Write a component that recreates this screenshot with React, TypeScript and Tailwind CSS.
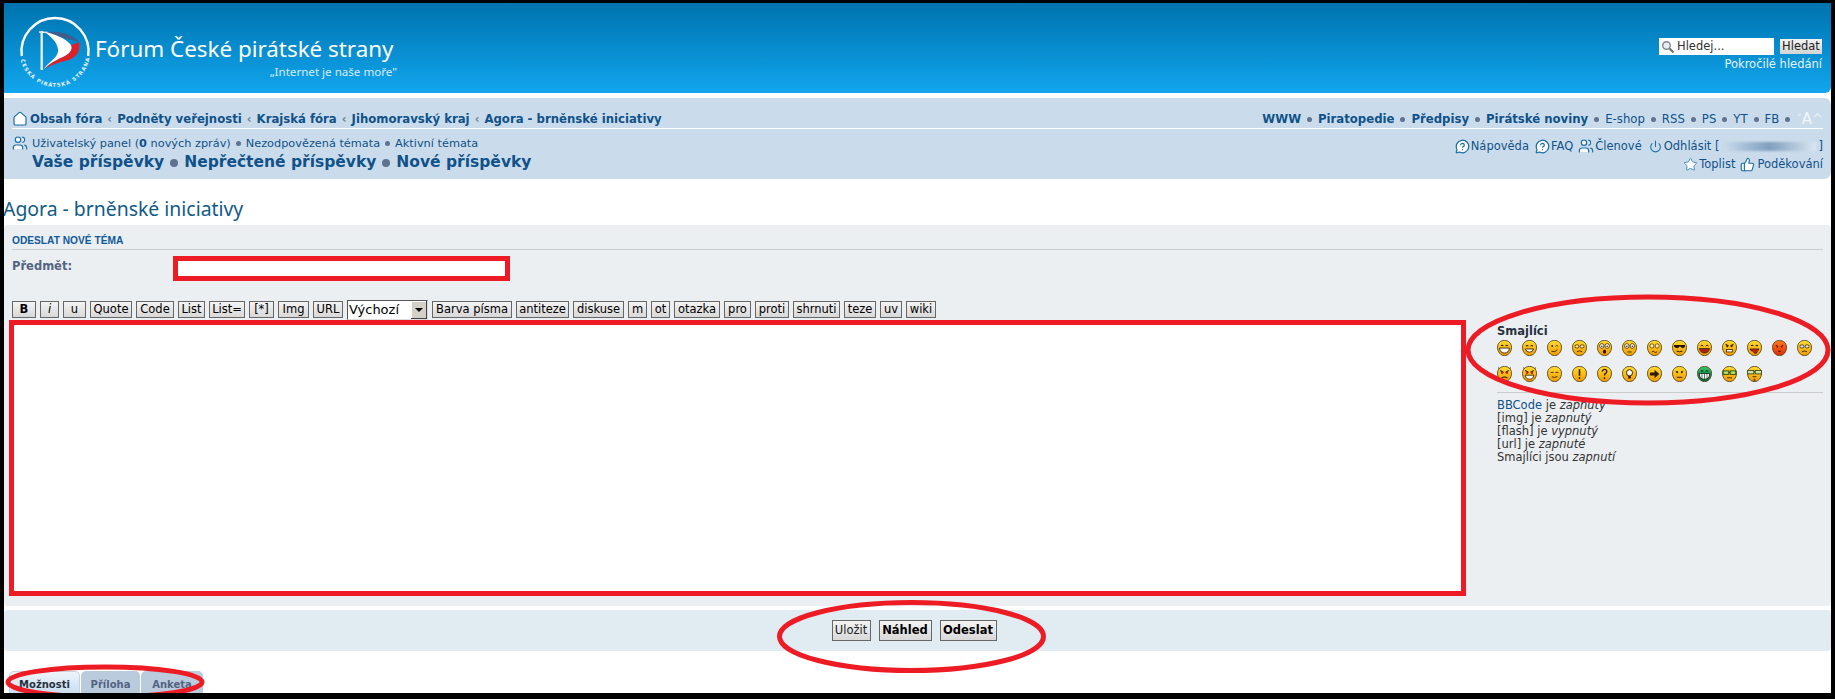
import { House, MessageCircleQuestion, Power, Star, ThumbsUp, Users } from "lucide-react";
import type { ReactNode } from "react";

const Sep = () => <span className="mx-[5px] size-[5px] shrink-0 rounded-full bg-[#5f7290]" />;
const WideSep = () => <span className="mx-[6px] size-[5px] shrink-0 rounded-full bg-[#5f7290]" />;
const Crumb = () => <span className="mx-[5px] font-bold text-[#6a86a4]">‹</span>;
const BigSep = () => <span className="mx-[6px] size-[8px] shrink-0 rounded-full bg-[#5f7290]" />;

const toolbar = [
  { label: "B", w: "w-[24px]", extra: "font-bold" },
  { label: "i", w: "w-[19px]", extra: "italic" },
  { label: "u", w: "w-[23px]", extra: "" },
  { label: "Quote", w: "w-[42px]", extra: "" },
  { label: "Code", w: "w-[38px]", extra: "" },
  { label: "List", w: "w-[27px]", extra: "" },
  { label: "List=", w: "w-[36px]", extra: "" },
  { label: "[*]", w: "w-[25px]", extra: "" },
  { label: "Img", w: "w-[31px]", extra: "" },
  { label: "URL", w: "w-[30px]", extra: "" },
];

const toolbar2 = [
  { label: "Barva písma", w: "w-[80px]" },
  { label: "antiteze", w: "w-[53px]" },
  { label: "diskuse", w: "w-[51px]" },
  { label: "m", w: "w-[19px]" },
  { label: "ot", w: "w-[19px]" },
  { label: "otazka", w: "w-[46px]" },
  { label: "pro", w: "w-[27px]" },
  { label: "proti", w: "w-[34px]" },
  { label: "shrnuti", w: "w-[47px]" },
  { label: "teze", w: "w-[32px]" },
  { label: "uv", w: "w-[22px]" },
  { label: "wiki", w: "w-[30px]" },
];

function ToolButton({ className, children }: { className: string; children: ReactNode }) {
  return (
    <button className={`h-[17px] shrink-0 border border-[#666666] bg-linear-to-b from-[#f4f4f4] to-[#d8d8d8] text-center text-[11.5px] leading-[15px] text-black ${className}`}>
      {children}
    </button>
  );
}

const eyes = (
  <>
    <circle cx="5.2" cy="5.8" r="0.9" fill="#2a1a00" />
    <circle cx="9.8" cy="5.8" r="0.9" fill="#2a1a00" />
  </>
);
const bigEyes = (
  <>
    <circle cx="4.8" cy="5.6" r="2.2" fill="#fff" stroke="#2a1a00" strokeWidth="0.7" />
    <circle cx="10.2" cy="5.6" r="2.2" fill="#fff" stroke="#2a1a00" strokeWidth="0.7" />
    <circle cx="4.8" cy="5.8" r="0.7" fill="#000" />
    <circle cx="10.2" cy="5.8" r="0.7" fill="#000" />
  </>
);
const line = "none";
const ink = "#2a1a00";

const faces: ReactNode[] = [
  <>
    <path d="M4 5.5q1.2-1.2 2.4 0M8.6 5.5q1.2-1.2 2.4 0" fill={line} stroke={ink} />
    <path d="M2.5 7.6h10q-.6 4.6-5 4.6t-5-4.6z" fill="#fff" stroke={ink} strokeWidth="0.8" />
  </>,
  <>
    <path d="M4 5.8q1.2-1.2 2.4 0M8.6 5.8q1.2-1.2 2.4 0" fill={line} stroke={ink} />
    <path d="M3.5 8.4h8q-.6 3-4 3t-4-3z" fill="#fff" stroke={ink} strokeWidth="0.8" />
  </>,
  <>
    <circle cx="5.2" cy="5.6" r="0.9" fill={ink} />
    <path d="M8.6 5.8q1.2-1.2 2.4 0M4.5 10.6q3.5 1.4 6-1.6" fill={line} stroke={ink} strokeWidth="0.8" />
  </>,
  <>
    <rect x="3" y="4.6" width="3.8" height="2.8" rx="1.2" fill="#ffe9a8" stroke={ink} strokeWidth="0.7" />
    <rect x="8.2" y="4.6" width="3.8" height="2.8" rx="1.2" fill="#ffe9a8" stroke={ink} strokeWidth="0.7" />
    <path d="M5 11q2.5-1.8 5 0" fill={line} stroke={ink} strokeWidth="0.8" />
  </>,
  <>
    {bigEyes}
    <ellipse cx="7.5" cy="11" rx="1.6" ry="2" fill="#3a0a00" />
  </>,
  <>
    {bigEyes}
    <path d="M5.5 11.2h4" fill={line} stroke={ink} strokeWidth="0.8" />
  </>,
  <>
    <circle cx="4.9" cy="5.6" r="2" fill="#ffe9a8" stroke={ink} strokeWidth="0.6" />
    <circle cx="10.1" cy="5.6" r="2" fill="#ffe9a8" stroke={ink} strokeWidth="0.6" />
    <path d="M4.8 11.2q1.4-1.4 2.7 0t2.7-.4" fill={line} stroke={ink} strokeWidth="0.8" />
  </>,
  <>
    <path d="M2 4.8h11v1.4q-1 1.6-2.6 1.4-1.4 0-2-1.4h-.8q-.6 1.4-2 1.4-2 .2-3.6-1.4z" fill="#241500" />
    <path d="M4.5 10.4q3 1.4 6 0" fill={line} stroke={ink} strokeWidth="0.9" />
  </>,
  <>
    <path d="M3.5 5.6q1.4-1.4 2.8 0M8.7 5.6q1.4-1.4 2.8 0" fill={line} stroke={ink} strokeWidth="0.9" />
    <path d="M2.5 8h10q-.8 4.2-5 4.2t-5-4.2z" fill="#b3201a" stroke={ink} strokeWidth="0.7" />
  </>,
  <>
    <path d="M3.6 4l3 1.6M11.4 4l-3 1.6" fill={line} stroke={ink} />
    {eyes}
    <rect x="4.5" y="9" width="6" height="2.2" fill="#fff" stroke={ink} strokeWidth="0.7" />
  </>,
  <>
    <path d="M4 5.5q1.2-1.2 2.4 0M8.6 5.5q1.2-1.2 2.4 0" fill={line} stroke={ink} />
    <path d="M3 8.4h9q-.6 1.6-1.6 2-.4 2.4-2.2 2.2-1.6 0-1.8-2-2.8 0-3.4-2.2z" fill="#c8201a" stroke={ink} strokeWidth="0.7" />
  </>,
  <>
    <path d="M3.8 5l2.4 1.2M11.2 5L8.8 6.2" fill={line} stroke="#5c1400" />
    <circle cx="5.2" cy="6.6" r="0.7" fill="#5c1400" />
    <circle cx="9.8" cy="6.6" r="0.7" fill="#5c1400" />
    <path d="M6 10.6h3" fill={line} stroke="#5c1400" />
  </>,
  <>
    <rect x="3" y="4.6" width="3.8" height="2.8" rx="1.2" fill="#cfe4f4" stroke={ink} strokeWidth="0.7" />
    <rect x="8.2" y="4.6" width="3.8" height="2.8" rx="1.2" fill="#cfe4f4" stroke={ink} strokeWidth="0.7" />
    <path d="M5 11q2.5-1.4 5 0" fill={line} stroke={ink} strokeWidth="0.8" />
  </>,
  <>
    <path d="M3.2 4.2l3.4 1.8M11.8 4.2L8.4 6" fill={line} stroke={ink} />
    <circle cx="5" cy="6.4" r="1.1" fill="#d01010" />
    <circle cx="10" cy="6.4" r="1.1" fill="#d01010" />
    <path d="M4.5 11.4q3-2.2 6 0" fill={line} stroke={ink} />
  </>,
  <>
    <path d="M3.2 4.2l3.4 1.8M11.8 4.2L8.4 6" fill={line} stroke={ink} />
    <circle cx="5" cy="6.4" r="1.1" fill="#d01010" />
    <circle cx="10" cy="6.4" r="1.1" fill="#d01010" />
    <path d="M3.2 8.6h8.6q-.6 3.8-4.3 3.8t-4.3-3.8z" fill="#fff" stroke={ink} strokeWidth="0.8" />
  </>,
  <>
    <path d="M3.6 6h3M8.4 6h3M4.8 10.2q3 1.2 5.6-.4" fill={line} stroke={ink} strokeWidth="0.8" />
  </>,
  <>
    <path d="M7.5 3v6.2" fill={line} stroke={ink} strokeWidth="1.6" />
    <circle cx="7.5" cy="11.2" r="0.9" fill={ink} />
  </>,
  <>
    <path d="M5.2 5.2q.4-2 2.4-2t2.2 1.9q0 1.2-1.3 1.9-1 .6-1 1.9" fill={line} stroke={ink} strokeWidth="1.3" />
    <circle cx="7.5" cy="11.4" r="0.9" fill={ink} />
  </>,
  <>
    <circle cx="7.5" cy="6.4" r="3" fill="#fff" stroke={ink} strokeWidth="0.9" />
    <rect x="6.2" y="9.2" width="2.6" height="2.6" fill={ink} />
  </>,
  <path d="M3 6.2h4.6V3.6l4.6 3.9-4.6 3.9V8.8H3z" fill={ink} />,
  <>
    <path d="M3.8 4.8l2.2.6M9 5.4l2.2-.6" fill={line} stroke={ink} strokeWidth="0.7" />
    {eyes}
    <path d="M4.8 10.6h5.4" fill={line} stroke={ink} strokeWidth="0.9" />
  </>,
  <>
    <path d="M4 5q1.2-1.2 2.4 0M8.6 5q1.2-1.2 2.4 0" fill={line} stroke="#021" />
    <path d="M2.4 7h10.2q.4 5.4-5.1 5.4T2.4 7z" fill="#fff" stroke="#021" strokeWidth="0.8" />
    <path d="M5 7v5M7.5 7v5.4M10 7v5" fill={line} stroke="#021" strokeWidth="0.6" />
  </>,
  <>
    <rect x="1.2" y="4.6" width="5.6" height="3.2" fill="#b8e26a" stroke="#1c3a00" strokeWidth="0.8" />
    <rect x="8.2" y="4.6" width="5.6" height="3.2" fill="#b8e26a" stroke="#1c3a00" strokeWidth="0.8" />
    <path d="M6.8 6h1.4M5 11h5" fill={line} stroke={ink} strokeWidth="0.8" />
  </>,
  <>
    <rect x="0.6" y="4.2" width="6.2" height="3.2" fill="#c6e6a0" stroke="#39401a" strokeWidth="0.8" />
    <rect x="8.2" y="4.2" width="6.2" height="3.2" fill="#c6e6a0" stroke="#39401a" strokeWidth="0.8" />
    <path d="M6.8 5.6h1.4M5.6 10h3.8" fill={line} stroke={ink} strokeWidth="0.8" />
    <path d="M6.6 12h1.8v2.4H6.6z" fill="#5a4a30" />
  </>,
];

function Smiley({ index }: { index: number }) {
  const green = index === 21;
  const red = index === 11;
  const from = green ? "#39c46a" : red ? "#ff7a1a" : "#ffdc30";
  const to = green ? "#046b30" : red ? "#e02a08" : "#f29a00";
  return (
    <svg width="15" height="16" viewBox="0 0 15 15" preserveAspectRatio="none" className="shrink-0">
      <defs>
        <linearGradient id={`face${index}`} x1="0" y1="0" x2="0" y2="1">
          <stop offset="0" stopColor={from} />
          <stop offset="1" stopColor={to} />
        </linearGradient>
      </defs>
      {(index === 13 || index === 14) && <path d="M1.2 1l3.4 2-2.6 2.4zM13.8 1l-3.4 2 2.6 2.4z" fill="#8a3a00" />}
      <path d="M7.5.4c4 0 7 2.700 7 6.400 0 4.300-3 7.800-7 7.800s-7-3.500-7-7.800C.5 3.100 3.500.4 7.500.4z" fill={`url(#face${index})`} stroke="#4a3a10" strokeWidth="0.8" />
      {faces[index]}
    </svg>
  );
}

function Logo() {
  return (
    <svg width="80" height="80" viewBox="0 0 80 80" className="shrink-0">
      <defs>
        <path id="logoTextArc" d="M5.500 47A35.300 35.300 0 0 0 74.500 47" />
      </defs>
      <path d="M6.800 44A33.500 33.500 0 1 1 73.200 44" fill="none" stroke="#fff" strokeWidth="2.400" />
      <rect x="25.500" y="19" width="2.400" height="39" fill="#e6eef5" />
      <path d="M24 20l9 .500" stroke="#e6eef5" strokeWidth="1.400" />
      <path d="M30 20C45 19 58 22 64 30C58 28 50 26 44 25C40 23 35 21 30 20z" fill="#3d5e8c" />
      <path d="M30 20C40 22 50 26 56 33C58 36 56 41 50 44C44 47 36 50 29 57C33 50 44 46 43 37C42 30 36 25 30 20z" fill="#fff" />
      <path d="M64 30C66 40 60 47 50 49C42 51 35 53 29 58C36 50 44 47 50 44C56 41 58 36 56 33C59 32 62 31 64 30z" fill="#e11f26" />
      <text fontSize="5.200" fontWeight="700" fill="#eaf4fb" fontFamily="'DejaVu Sans', sans-serif" letterSpacing="1">
        <textPath href="#logoTextArc" startOffset="1%">ČESKÁ PIRÁTSKÁ STRANA</textPath>
      </text>
    </svg>
  );
}

export default function App() {
  const row1 = Array.from({ length: 13 }, (_, i) => i);
  const row2 = Array.from({ length: 11 }, (_, i) => i + 13);
  return (
    <div className="relative h-[699px] w-[1835px] overflow-hidden border-t-[3px] border-r-[4px] border-b-[6px] border-l-[4px] border-black bg-white text-[11.5px] text-[#536482] [font-family:'DejaVu_Sans',sans-serif]">
      {/* header */}
      <header className="flex h-[90px] items-start justify-between rounded-br-[6px] bg-linear-to-b from-[#0073ae] to-[#12a6ee] pr-[9px]">
        <div className="flex pl-[11px] pt-[9px]">
          <Logo />
          <div className="flex w-[304px] flex-col items-end pt-[22px] text-white [font-family:'Noto_Sans',sans-serif]">
            <span className="self-start text-[22.400px] leading-[30px]">Fórum České pirátské strany</span>
            <span className="pr-[2px] text-[11.600px] leading-[16px] text-[#d5ecfa]">„Internet je naše moře"</span>
          </div>
        </div>
        <div className="flex flex-col items-end pt-[35px]">
          <div className="flex h-[17px] items-center">
            <div className="flex h-[17px] w-[115px] items-center gap-[2px] bg-white pl-[2px] text-[#333]">
              <svg width="14" height="14" viewBox="0 0 14 14">
                <circle cx="5.500" cy="5.500" r="3.800" fill="#e8edf2" stroke="#7d8894" strokeWidth="1.400" />
                <path d="M8.500 8.500l4 4" stroke="#6f6f6f" strokeWidth="2.200" />
              </svg>
              Hledej...
            </div>
            <button className="ml-[6px] h-[15px] w-[42px] bg-linear-to-b from-[#f4f4f4] to-[#d4d4d4] text-center leading-[15px] text-[#222]">Hledat</button>
          </div>
          <span className="mt-[2px] leading-[15px] text-[#e4f3fc]">Pokročilé hledání</span>
        </div>
      </header>

      {/* nav panel */}
      <nav className="mt-[5px] h-[81px] rounded-r-[7px] bg-[#cadceb] px-[8px] text-[#105289]">
        <div className="flex h-[31px] items-end justify-between border-b border-white text-[11.700px]">
          <div className="flex items-center font-bold leading-[18px]">
            <House size={16} strokeWidth={1.8} className="mr-[2px] fill-white text-[#1a6fa8]" />
            <span>Obsah fóra</span>
            <Crumb />
            <span>Podněty veřejnosti</span>
            <Crumb />
            <span>Krajská fóra</span>
            <Crumb />
            <span>Jihomoravský kraj</span>
            <Crumb />
            <span>Agora - brněnské iniciativy</span>
          </div>
          <div className="flex items-center leading-[18px]">
            <span className="font-bold">WWW</span><WideSep />
            <span className="font-bold">Piratopedie</span><WideSep />
            <span className="font-bold">Předpisy</span><WideSep />
            <span className="font-bold">Pirátské noviny</span><WideSep />
            <span>E-shop</span><WideSep />
            <span>RSS</span><WideSep />
            <span>PS</span><WideSep />
            <span>YT</span><WideSep />
            <span>FB</span><WideSep />
            <span className="flex items-center text-[#eef5fb]">
              <span className="text-[11px]">˅</span>
              <span className="text-[15px] leading-[18px]">A</span>
              <span className="text-[13px]">^</span>
            </span>
          </div>
        </div>
        <div className="flex justify-between">
          <div className="flex flex-col pt-[6px]">
            <div className="flex items-center text-[11.300px] leading-[15px]">
              <Users size={16} strokeWidth={1.8} className="mr-[4px] fill-white text-[#1a6fa8]" />
              <span>Uživatelský panel (<b>0</b> nových zpráv)</span>
              <Sep />
              <span>Nezodpovězená témata</span>
              <Sep />
              <span>Aktivní témata</span>
            </div>
            <div className="ml-[20px] mt-[1px] flex items-center text-[15.500px] font-bold leading-[21px]">
              <span>Vaše příspěvky</span>
              <BigSep />
              <span>Nepřečtené příspěvky</span>
              <BigSep />
              <span>Nové příspěvky</span>
            </div>
          </div>
          <div className="flex flex-col items-end pt-[9px]">
            <div className="flex items-center leading-[15px]">
              <MessageCircleQuestion size={15} strokeWidth={2} className="mr-[1px] fill-white text-[#1a6fa8]" />
              <span>Nápověda</span>
              <MessageCircleQuestion size={15} strokeWidth={2} className="ml-[6px] mr-[1px] fill-white text-[#1a6fa8]" />
              <span>FAQ</span>
              <Users size={16} strokeWidth={1.8} className="ml-[5px] mr-[1px] fill-white text-[#1a6fa8]" />
              <span>Členové</span>
              <Power size={13} strokeWidth={2} className="ml-[7px] mr-[2px] text-[#1a6fa8]" />
              <span>Odhlásit [</span>
              <span className="mx-[3px] h-[9px] w-[93px] bg-linear-to-r from-[#cadceb] via-[#7f9fbe] to-[#dbe7f1] blur-[1px]" />
              <span>]</span>
            </div>
            <div className="mt-[3px] flex items-center leading-[15px]">
              <Star size={15} strokeWidth={1.6} className="mr-[1px] fill-white text-[#4b90b8]" />
              <span>Toplist</span>
              <ThumbsUp size={15} strokeWidth={1.8} className="ml-[5px] mr-[2px] fill-white text-[#1a6fa8]" />
              <span>Poděkování</span>
            </div>
          </div>
        </div>
      </nav>

      {/* page title */}
      <h2 className="-ml-[1px] h-[46px] pt-[16px] text-[19.400px] leading-[27px] text-[#115a8a] [font-family:'Noto_Sans',sans-serif]">Agora - brněnské iniciativy</h2>

      {/* posting panel */}
      <section className="h-[381px] rounded-[4px] bg-[#ebeff2] pb-[10px]">
        <div className="mx-[8px] flex h-[25px] items-end border-b border-[#c8ccd0] pb-[1px] text-[10.200px] font-bold uppercase text-[#115a9a] [font-family:'Liberation_Sans',sans-serif]">
          Odeslat nové téma
        </div>
        <div className="flex h-[31px] items-start pl-[8px] pt-[6px]">
          <label className="w-[161px] pt-[3px] font-bold leading-[15px] text-[#536482]">Předmět:</label>
          <input className="h-[25px] w-[337px] border-[5px] border-[#ed1c24] bg-white" />
        </div>
        <div className="flex">
          <div className="w-[1462px] shrink-0 pl-[5px]">
            <div className="mt-[20px] ml-[3px] flex h-[17px] items-center gap-[4px]">
              {toolbar.map((b) => (
                <ToolButton key={b.label} className={`${b.w} ${b.extra}`}>{b.label}</ToolButton>
              ))}
              <div className="flex h-[20px] w-[81px] shrink-0 items-center justify-between border border-t-[#555] border-l-[#555] border-r-[#ddd] border-b-[#ddd] bg-white pl-[1px] text-[13px] leading-[18px] text-black">
                Výchozí
                <span className="flex h-[18px] w-[16px] items-center justify-center bg-[#d4d0c8] shadow-[inset_-1px_-1px_#404040,inset_1px_1px_#fff]">
                  <span className="h-0 w-0 border-x-[4px] border-t-[4px] border-x-transparent border-t-black" />
                </span>
              </div>
              {toolbar2.map((b) => (
                <ToolButton key={b.label} className={b.w}>{b.label}</ToolButton>
              ))}
            </div>
            <textarea className="mt-[2px] block h-[276px] w-[1457px] resize-none border-[5px] border-[#ed1c24] bg-white" />
          </div>
          <aside className="ml-[31px] flex w-[326px] flex-col pt-[44px] text-[#333]">
            <span className="font-bold leading-[12px] text-[#28313f]">Smajlíci</span>
            <div className="mt-[3px] flex gap-[10px]">
              {row1.map((i) => <Smiley key={i} index={i} />)}
            </div>
            <div className="mt-[10px] flex gap-[10px]">
              {row2.map((i) => <Smiley key={i} index={i} />)}
            </div>
            <div className="mt-[10px] border-t border-[#cccccc] pt-[6px] leading-[13px]">
              <div><span className="text-[#105289]">BBCode</span> je <i>zapnutý</i></div>
              <div>[img] je <i>zapnutý</i></div>
              <div>[flash] je <i>vypnutý</i></div>
              <div>[url] je <i>zapnuté</i></div>
              <div>Smajlíci jsou <i>zapnutí</i></div>
            </div>
          </aside>
        </div>
      </section>

      {/* submit buttons */}
      <div className="mt-[4px] flex h-[41px] items-center justify-center gap-[8px] rounded-[4px] bg-[#e1ebf2] pr-[7px]">
        <button className="h-[21px] w-[39px] border border-[#666666] bg-linear-to-b from-[#f4f4f4] to-[#d8d8d8] text-[#222]">Uložit</button>
        <button className="h-[21px] w-[53px] border border-[#666666] bg-linear-to-b from-[#f4f4f4] to-[#d8d8d8] font-bold text-black">Náhled</button>
        <button className="h-[21px] w-[57px] border border-[#666666] bg-linear-to-b from-[#f4f4f4] to-[#d8d8d8] font-bold text-black">Odeslat</button>
      </div>

      {/* tabs */}
      <div className="mt-[20px] flex h-[22px] items-start gap-[1px] pl-[5px] text-[10px] font-bold">
        <span className="flex h-[24px] w-[71px] justify-center rounded-t-[5px] border border-b-0 border-[#c7d4df] bg-linear-to-b from-[#eef5fb] to-[#c5dcef] pt-[5px] text-[#28313f]">Možnosti</span>
        <span className="flex h-[24px] w-[59px] justify-center rounded-t-[5px] bg-[#b9cbdc] pt-[6px] text-[#536482]">Příloha</span>
        <span className="flex h-[24px] w-[62px] justify-center rounded-t-[5px] bg-[#b9cbdc] pt-[6px] text-[#536482]">Anketa</span>
      </div>

      {/* red marker ellipses drawn over the page */}
      <svg className="pointer-events-none absolute left-0 top-0" width="1827" height="690" viewBox="4 3 1827 690">
        <ellipse cx="1648" cy="350" rx="180" ry="53" fill="none" stroke="#ed1c24" strokeWidth="5" />
        <ellipse cx="911.500" cy="636.500" rx="132" ry="34" fill="none" stroke="#ed1c24" strokeWidth="5" />
        <ellipse cx="105" cy="682" rx="97" ry="15" fill="none" stroke="#ed1c24" strokeWidth="5" />
      </svg>
    </div>
  );
}
